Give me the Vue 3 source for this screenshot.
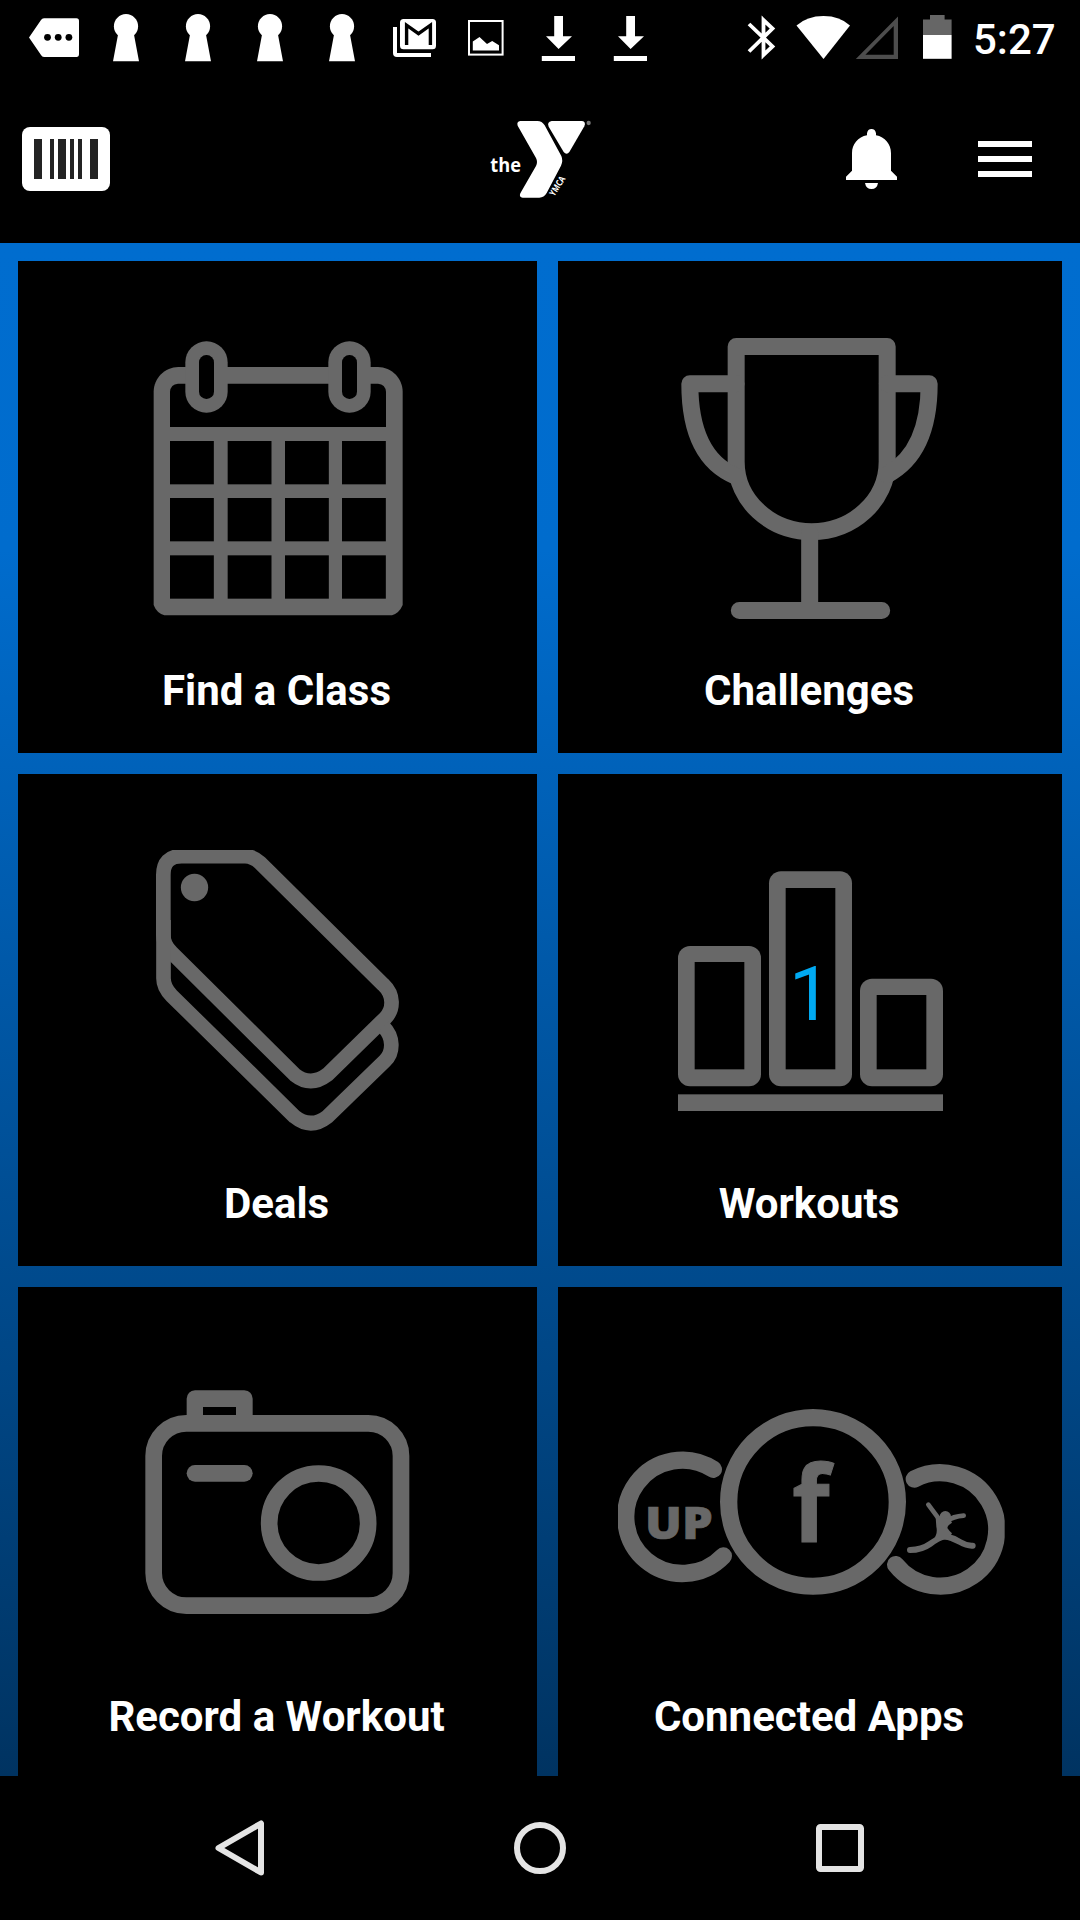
<script setup>
import { ref } from 'vue';

const time = ref('5:27');
const workouts = ref(1);

const notifications = ['more', 'key', 'key', 'key', 'key', 'mail', 'image', 'download', 'download'];

const tiles = [
  { id: 'class', label: 'Find a Class', box: '-306 -147 1557 1170' },
  { id: 'challenges', label: 'Challenges', box: '-246 -147 1512 1170' },
  { id: 'deals', label: 'Deals', box: '-306 -138 1557 1170' },
  { id: 'workouts', label: 'Workouts', box: '-246 -198 1512 1170' },
  { id: 'record', label: 'Record a Workout', box: '-246 -219 1557 1170' },
  { id: 'apps', label: 'Connected Apps', box: '-126 -309 1512 1170' },
];

// calendar cells
const cols = [150, 323, 495, 666];
const rows = [393, 564, 736];
</script>

<template>
  <div class="screen">
    <div class="status">
      <div class="notifications">
        <svg v-for="(n, i) in notifications" :key="i" viewBox="0 0 72 80">
          <template v-if="n === 'more'">
            <path d="M11 37.5L23 20Q24 18.3 26 18.3H58.5Q61 18.3 61 21V54Q61 57 58.5 57H26Q24 57 23 55Z" />
            <circle class="hole" cx="29.5" cy="37.3" r="3.4" />
            <circle class="hole" cx="40.2" cy="37.3" r="3.4" />
            <circle class="hole" cx="50.9" cy="37.3" r="3.4" />
          </template>
          <template v-else-if="n === 'key'">
            <circle cx="36" cy="26.2" r="12.1" />
            <path d="M28.5 32H43.5L49 61.2H23Z" />
          </template>
          <template v-else-if="n === 'mail'">
            <rect x="22" y="19" width="36" height="30.3" rx="3.5" />
            <path class="envelope" d="M28.6 45V25.2L40.5 33.6L52.4 25.2V45" />
            <path d="M15 27H19V53H53V57H19Q15 57 15 53Z" />
          </template>
          <template v-else-if="n === 'image'">
            <rect class="frame" x="19" y="21" width="33.6" height="33.6" />
            <path d="M22.8 50.4V41.5L29.5 37L37 44L42.2 41L49 45.2V50.4Z" />
          </template>
          <template v-else>
            <path d="M32.2 16H41V36.3H50L36.6 49L24 36.3H32.2Z" />
            <rect x="19.8" y="56" width="33.2" height="5" />
          </template>
        </svg>
      </div>
      <svg class="system" viewBox="740 0 220 80">
        <path class="bluetooth" d="M749 24L772.500 46.500L763.500 55V20L772.500 28.500L749 51.500" />
        <path d="M796.5 25.5Q807 16 823.5 16T850 25.5L823.5 59Z" />
        <path class="signal" d="M855.800 59L898 16.500V59ZM865.400 54.800H893.700V26Z" />
        <path class="empty" d="M923 35V19.5H930V15H944.6V19.5H951.6V35Z" />
        <rect x="923" y="35" width="28.6" height="23.8" />
      </svg>
      <span class="time">{{ time }}</span>
    </div>

    <header class="header">
      <svg class="barcode" viewBox="22 127 88 64">
        <rect class="plate" x="22" y="127" width="88" height="64" rx="8" />
        <path d="M34 139h8v40h-8zM50 139h4v40h-4zM58 139h8v40h-8zM70 139h4v40h-4zM78 139h4v40h-4zM90 139h8v40h-8z" />
      </svg>
      <svg class="logo" viewBox="0 -3 480 360">
        <path d="M181 63H232Q246 63 254 76L304 168Q310 182 303 197L260 279Q252 293 238 293H188Q176 292 181 280L228 198Q234 186 228 174L173 77Q169 65 181 63Z" />
        <path d="M275 63H366Q379 65 373 79L328 156Q320 167 311 156L266 80Q260 66 275 63Z" />
        <text class="the" x="91" y="216" textLength="92" lengthAdjust="spacingAndGlyphs">the</text>
        <text class="ymca" transform="translate(283 290) rotate(-58)" textLength="64" lengthAdjust="spacingAndGlyphs">YMCA</text>
        <circle class="mark" cx="386" cy="69" r="6.5" />
      </svg>
      <div class="actions">
        <svg class="bell" viewBox="138 87 153 180">
          <path d="M138 240V230L156 212V160C156 132 174 111 201 106V100Q203 87 214.5 87T228 100V106C255 111 273 132 273 160V212L291 230V240ZM195 249H234Q231 267 214.5 267T195 249Z" />
        </svg>
        <div class="menu"><i></i><i></i><i></i></div>
      </div>
    </header>

    <main class="tiles">
      <section v-for="tile in tiles" :key="tile.id" class="tile">
        <svg class="icon" :viewBox="tile.box">
          <template v-if="tile.id === 'class'">
            <path d="M101 245C101 205 135 171 175 171H774C814 171 848 205 848 245V885Q838 909 816 916H133Q110 909 101 885Z" />
            <path class="hole" d="M150 351V245Q152 223 174 221H774Q796 223 798 245V351Z" />
            <template v-for="y in rows" :key="y">
              <rect v-for="x in cols" :key="x" class="hole" :x="x" :y="y" width="131.5" height="130" />
            </template>
            <g v-for="x in [196, 625]" :key="x">
              <rect :x="x" y="94" width="127" height="214" rx="63" />
              <rect class="hole" :x="x + 41" y="135" width="45" height="132" rx="22" />
            </g>
          </template>

          <g v-else-if="tile.id === 'challenges'" class="line cup">
            <path d="M288.5 109.5H741.5V455C741.5 572 638 665 515 665S288.5 572 288.5 455Z" />
            <path d="M288 221.5H149.5C149.5 370 198 462 288 499" />
            <path d="M742 221.5H867.5C867.5 370 820 452 742 494" />
            <path d="M509 670V895M298 901.5H725" />
          </g>

          <template v-else-if="tile.id === 'deals'">
            <clipPath id="tagTop"><rect x="90" y="90" width="800" height="860" /></clipPath>
            <g class="line tag" clip-path="url(#tagTop)">
              <path d="M185 108.5H375Q398 108.5 420 128L790 494C822 524 822 568 795 595L622 764Q572 802 524 764L155 398Q130 375 130 345V165Q130 108.5 185 108.5Z" />
              <path d="M130.5 300V475Q130.5 503 155 527L524 890Q572 929 622 890L795 722C822 696 820 649 790 620" />
            </g>
            <circle cx="223.5" cy="202.5" r="41" />
          </template>

          <template v-else-if="tile.id === 'workouts'">
            <rect x="114" y="318" width="249" height="421" rx="36" />
            <rect x="387" y="94" width="249" height="645" rx="36" />
            <rect x="660" y="416" width="249" height="323" rx="36" />
            <rect class="hole" x="164" y="366" width="149" height="322" />
            <rect class="hole" x="437" y="144" width="149" height="544" />
            <rect class="hole" x="710" y="465" width="149" height="223" />
            <rect x="114" y="763" width="795" height="50" />
            <text class="count" x="447" y="540">{{ workouts }}</text>
          </template>

          <template v-else-if="tile.id === 'record'">
            <path d="M260 190V116Q262 93 285 91H433Q456 93 458 116V190Z" />
            <rect class="hole" x="309" y="141" width="99" height="25" />
            <g class="line camera">
              <rect x="161" y="190" width="742" height="547" rx="98" />
              <path d="M285 340H433" />
              <circle cx="656" cy="489" r="148.5" />
            </g>
          </template>

          <template v-else>
            <clipPath id="rings"><rect x="54" y="57" width="1160" height="557" /></clipPath>
            <g class="line rings" clip-path="url(#rings)">
              <path d="M340 238A170 170 0 1 0 370 498" />
              <circle cx="639" cy="336" r="253" />
              <path d="M943 267A170 170 0 1 1 887 524" />
            </g>
            <text class="up" x="135" y="447" textLength="203" lengthAdjust="spacingAndGlyphs">UP</text>
            <text class="fb" x="576" y="456" textLength="113" lengthAdjust="spacingAndGlyphs">f</text>
            <g class="line jumper">
              <path class="arm" d="M985 344L1020 391M1091 377Q1060 379 1038 394" />
              <path class="leg" d="M930 480Q965 480 990 462T1035 438Q1060 444 1080 456T1118 467" />
            </g>
            <circle cx="1036" cy="380" r="17" />
            <path d="M1007 382L1050 386L1056 398Q1042 406 1042 414Q1047 422 1056 430L1044 449L1000 448Q1014 432 1009 410Z" />
          </template>
        </svg>
        <span class="label">{{ tile.label }}</span>
      </section>
    </main>

    <nav class="nav">
      <svg viewBox="0 0 60 60"><path d="M51 5.5V54.5L8.5 30Z" /></svg>
      <svg viewBox="0 0 60 60"><circle cx="30" cy="30" r="23" /></svg>
      <svg viewBox="0 0 60 60"><rect x="9" y="9" width="42" height="42" rx="1.5" /></svg>
    </nav>
  </div>
</template>

<style>
body { background: #000; }
</style>

<style scoped>
.screen { width: 1080px; height: 1920px; display: flex; flex-direction: column; overflow: hidden; background: #000; color: #fff; font-family: Roboto, sans-serif; }
svg { display: block; fill: #fff; }
.hole { fill: #000; }

.status { display: flex; height: 80px; padding-left: 18px; }
.notifications { display: flex; width: 722px; }
.notifications svg { width: 72px; height: 80px; }
.envelope { fill: none; stroke: #000; stroke-width: 3.4; }
.frame { fill: none; stroke: #fff; stroke-width: 2; }
.system { width: 220px; height: 80px; }
.bluetooth { fill: none; stroke: #fff; stroke-width: 3.8; }
.signal { fill: #4d4d4d; fill-rule: evenodd; }
.empty { fill: #666; }
.time { margin-left: 13px; line-height: 80px; font-size: 42px; font-weight: 500; }

.header { display: grid; grid-template-columns: 438px 160px 1fr; align-items: center; height: 163px; padding: 0 48px 5px 22px; box-sizing: border-box; }
.barcode { width: 88px; height: 64px; fill: #232323; }
.plate { fill: #fff; }
.logo { width: 160px; height: 120px; }
.the { font: 700 60px "Open Sans", sans-serif; }
.ymca { font: 700 27px "Open Sans", sans-serif; }
.mark { fill: #777; }
.actions { display: flex; justify-content: flex-end; align-items: center; gap: 81px; }
.bell { width: 51px; height: 60px; }
.menu { display: flex; flex-direction: column; gap: 9px; width: 54px; }
.menu i { height: 6px; background: #fff; }

.tiles { display: grid; grid-template-columns: 519px 504px; grid-auto-rows: 492px; gap: 21px; height: 1533px; padding: 18px 18px 0; box-sizing: border-box; overflow: hidden; background: linear-gradient(#006dcf 0, #006ccd 20%, #003361 100%); }
.tile { display: flex; flex-direction: column; align-items: center; background: #000; }
.icon { width: 100%; height: 390px; fill: #686868; }
.icon .hole { fill: #000; }
.line { fill: none; stroke: #686868; stroke-linejoin: round; }
.cup { stroke-width: 51; stroke-linecap: round; }
.tag { stroke-width: 44; }
.camera { stroke-width: 50; stroke-linecap: round; }
.rings { stroke-width: 52; stroke-linecap: round; }
.jumper { stroke-linecap: round; }
.arm { stroke-width: 14; }
.leg { stroke-width: 18; }
.count { font-size: 226px; fill: #00aaf2; }
.up { font: 800 134px "Open Sans", sans-serif; stroke: #686868; stroke-width: 2; }
.fb { font: 700 320px "Open Sans", sans-serif; stroke: #686868; stroke-width: 3; }
.label { margin-top: 15px; padding-right: 2px; font-size: 42px; line-height: 50px; font-weight: 700; white-space: nowrap; }

.nav { display: flex; justify-content: space-between; align-items: center; height: 144px; padding: 0 210px; }
.nav svg { width: 60px; height: 60px; fill: none; stroke: #e4e4e4; stroke-width: 6; stroke-linejoin: round; }
</style>
